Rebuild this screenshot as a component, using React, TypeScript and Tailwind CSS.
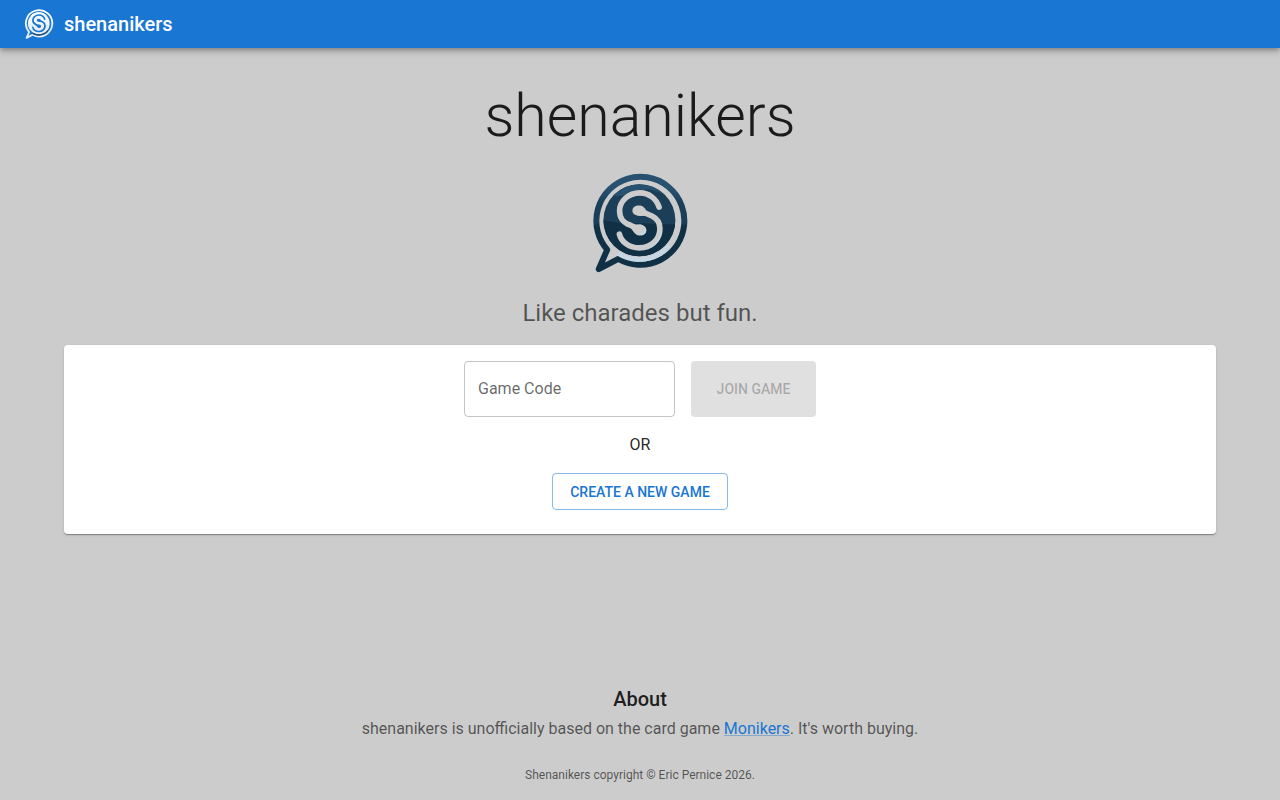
import { useId, useState } from "react";

const palettes = {
  dark: { top: "#28506f", middle: "#1b3f58", bottom: "#103145", shine: "#c5d6e4" },
  light: { top: "#ffffff", middle: "#f4f8fc", bottom: "#e6eff8", shine: "#34506f" },
};

type LogoProps = {
  variant: keyof typeof palettes;
  className?: string;
};

function Logo({ variant, className }: LogoProps) {
  const id = useId();
  const colors = palettes[variant];

  return (
    <svg viewBox="0.6 0.3 100 100" fill="none" aria-hidden="true" className={className}>
      <defs>
        <linearGradient id={`${id}-ring`} gradientUnits="userSpaceOnUse" x1="50" y1="0" x2="50" y2="100">
          <stop offset="0.16" stopColor={colors.top} />
          <stop offset="0.32" stopColor={colors.middle} />
          <stop offset="0.5" stopColor={colors.middle} />
          <stop offset="0.54" stopColor={colors.bottom} />
        </linearGradient>
        <mask id={`${id}-cut`} maskUnits="userSpaceOnUse" x="0" y="0" width="100" height="100">
          <rect width="100" height="100" fill="white" />
          <g stroke="black" strokeWidth="5.6" strokeLinecap="round" strokeLinejoin="round">
            <path d="M69.7 34.5C67 26 59.5 20.2 50.5 20.2C39 20.2 30.2 28.5 30.2 38C30.2 46.5 34 50 41 52.5L51 57" />
            <path d="M49.5 37.5L63 43.5C68 46 70.5 50.5 70.5 56C70.5 67 61.5 75.2 50 75.2C40 75.2 32 69.5 30 61.5" />
          </g>
          <g fill="black">
            <path d="M43 38C43 34.5 46 32.8 49.5 32.8C54 32.8 55.5 35.5 57 38L61 43L50 43.4C45.5 42.3 43 41 43 38Z" />
            <path d="M56.9 57.5C56.9 61 54 62.9 51 62.9C47 62.9 45 60.5 43 57.5L39 52.4L51 51.6C55 52.5 56.9 55 56.9 57.5Z" />
          </g>
        </mask>
        <clipPath id={`${id}-disc`}>
          <circle cx="50" cy="47.5" r="36" />
        </clipPath>
      </defs>
      <path
        d="M17.8 77A44 44 0 1 1 29 86.2L9.3 96.5Z"
        stroke={`url(#${id}-ring)`}
        strokeWidth="6"
        strokeLinejoin="round"
      />
      <path d="M28 80.5A39 39 0 0 0 79.5 73" stroke={colors.shine} strokeWidth="4.6" />
      <g mask={`url(#${id}-cut)`}>
        <g clipPath={`url(#${id}-disc)`}>
          <rect width="100" height="100" fill={colors.middle} />
          <path d="M0 0H100V30C86 29 79 21 62 17C48 15 40 25 24 23L0 28Z" fill={colors.top} />
          <path d="M0 48C20 46 28 52 43 51C60 49 73 54 100 50V100H0Z" fill={colors.bottom} />
        </g>
      </g>
      <path d="M55.5 54.5C56 58 53 60.5 48.5 61.6C53 63.6 57 61 56.9 57.5C56.9 56 56.4 55.2 55.5 54.5Z" fill={colors.shine} />
      <path d="M72.4 58C71.5 66 67 71.5 61 74.8" stroke={colors.shine} strokeWidth="1.2" />
    </svg>
  );
}

export default function App() {
  const [code, setCode] = useState("");

  return (
    <div className="flex min-h-screen flex-col bg-[#cccccc] font-['Roboto',sans-serif] text-black/87">
      <header className="relative flex h-12 items-center gap-2 bg-[#1976d2] px-6 text-white shadow-[0_2px_4px_-1px_rgba(0,0,0,0.2),0_4px_5px_0_rgba(0,0,0,0.14),0_1px_10px_0_rgba(0,0,0,0.12)]">
        <span className="flex w-8">
          <Logo variant="light" className="size-[30px]" />
        </span>
        <span className="text-xl leading-8 font-medium">shenanikers</span>
      </header>

      <main className="flex flex-col items-center px-16 pt-8">
        <h1 className="text-[59px] leading-[72px] font-light">shenanikers</h1>
        <Logo variant="dark" className="mt-[21px] size-[100px]" />
        <p className="mt-6 text-2xl text-black/60">Like charades but fun.</p>

        <section className="mt-4 flex w-full flex-col items-center gap-4 rounded bg-white pt-4 pb-6 shadow-[0_2px_1px_-1px_rgba(0,0,0,0.2),0_1px_1px_0_rgba(0,0,0,0.14),0_1px_3px_0_rgba(0,0,0,0.12)]">
          <form className="flex gap-4" onSubmit={(e) => e.preventDefault()}>
            <div className="relative">
              <input
                id="game-code"
                type="text"
                autoComplete="off"
                placeholder=" "
                value={code}
                onChange={(e) => setCode(e.target.value)}
                className="peer h-14 w-[211px] rounded border border-black/23 px-[13px] text-base outline-none focus:border-[#1976d2]"
              />
              <label
                htmlFor="game-code"
                className="pointer-events-none absolute -top-2 left-2.5 bg-white px-1 text-xs text-black/60 peer-placeholder-shown:top-4 peer-placeholder-shown:text-base peer-focus:-top-2 peer-focus:text-xs peer-focus:text-[#1976d2]"
              >
                Game Code
              </label>
            </div>
            <button
              type="submit"
              disabled={!code}
              className="h-14 w-[125px] rounded bg-[#1976d2] text-sm font-medium text-white uppercase disabled:bg-black/12 disabled:text-black/26"
            >
              Join Game
            </button>
          </form>
          <p className="text-base">OR</p>
          <button
            type="button"
            className="h-[37px] w-44 rounded border border-[#1976d2]/50 text-sm font-medium text-[#1976d2] uppercase hover:bg-[#1976d2]/5"
          >
            Create a new game
          </button>
        </section>
      </main>

      <footer className="mt-auto flex flex-col items-center gap-0.5 px-6 pt-12 pb-[15px] text-center text-black/60">
        <h2 className="text-xl leading-8 font-medium text-black/87">About</h2>
        <p className="text-base">
          shenanikers is unofficially based on the card game{" "}
          <a
            href="#monikers"
            className="text-[#1976d2] underline decoration-[#1976d2]/40 hover:decoration-[#1976d2]"
          >
            Monikers
          </a>
          . It's worth buying.
        </p>
        <p className="mt-[22px] text-xs leading-5">Shenanikers copyright © Eric Pernice 2026.</p>
      </footer>
    </div>
  );
}
